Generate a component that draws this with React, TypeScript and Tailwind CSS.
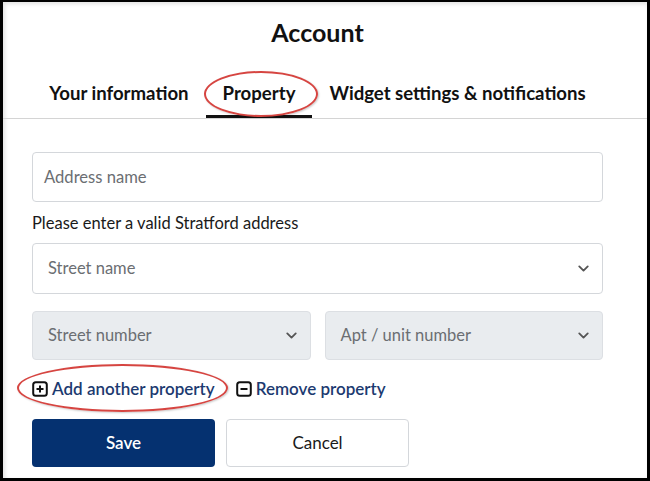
import { ChevronDown } from 'lucide-react';

function BoxIcon({ minus = false }: { minus?: boolean }) {
  return (
    <svg viewBox="0 0 16 16" className="h-[16px] w-[16px] shrink-0">
      <rect x="1.2" y="1.2" width="13.6" height="13.6" rx="2.5" fill="none" stroke="#111" strokeWidth="2" />
      <line x1="4.5" y1="8" x2="11.5" y2="8" stroke="#111" strokeWidth="2" />
      {!minus && <line x1="8" y1="4.5" x2="8" y2="11.5" stroke="#111" strokeWidth="2" />}
    </svg>
  );
}

function Select({ label, disabled = false }: { label: string; disabled?: boolean }) {
  return (
    <div
      className={
        disabled
          ? 'flex h-[49px] items-center justify-between rounded-[4px] border border-[#dcdfe3] bg-[#e9ecef] pl-[15px] pr-[10px]'
          : 'flex h-[51px] items-center justify-between rounded-[4px] border border-[#d4d7db] bg-white pl-[15px] pr-[10px]'
      }
    >
      <span className="text-[16.5px] text-[#6b6e72]">{label}</span>
      <ChevronDown className="h-[17px] w-[17px] text-[#555]" strokeWidth={2.6} />
    </div>
  );
}

export default function App() {
  const tabs = ['Your information', 'Property', 'Widget settings & notifications'];

  return (
    <div className="relative h-[481px] w-[650px] overflow-hidden border-b-[3px] border-l-[3px] border-r-[3px] border-t-2 border-black bg-white font-['Lato',sans-serif] text-[#212529] shadow-[inset_2px_2px_4px_rgba(0,0,0,0.12)]">
      <h1 className="pl-[29px] pr-[44px] pt-[16px] text-center text-[25px] font-bold leading-[29px] text-[#111]">
        Account
      </h1>

      {/* Tabs */}
      <div className="mt-[35px] flex justify-center whitespace-nowrap pl-[29px] pr-[44px]">
        {tabs.map((t) => (
          <div
            key={t}
            className={
              t === 'Property'
                ? 'shrink-0 border-b-[3px] border-[#111] px-[17px] pb-[11px] text-[18.6px] font-bold leading-[22px] text-[#111]'
                : 'shrink-0 border-b-[3px] border-transparent px-[17px] pb-[11px] text-[18.6px] font-bold leading-[22px] text-[#111]'
            }
          >
            {t}
          </div>
        ))}
      </div>
      <div className="h-px bg-[#d4d4d4]" />

      {/* Form */}
      <div className="pl-[29px] pr-[44px]">
        <div className="mt-[33px] flex h-[50px] items-center rounded-[4px] border border-[#d4d7db] pl-[11px]">
          <span className="text-[16.6px] text-[#6b6e72]">Address name</span>
        </div>
        <p className="mt-[11px] text-[16.5px] leading-[20px] text-[#1a1a1a]">
          Please enter a valid Stratford address
        </p>
        <div className="mt-[10px]">
          <Select label="Street name" />
        </div>
        <div className="mt-[17px] grid grid-cols-2 gap-[14px]">
          <Select label="Street number" disabled />
          <Select label="Apt / unit number" disabled />
        </div>

        <div className="mt-[18px] flex items-center gap-[21px] text-[17px] font-semibold leading-[22px] text-[#1c3a70]">
          <span className="flex items-center gap-[4px]">
            <BoxIcon />
            Add another property
          </span>
          <span className="flex items-center gap-[4px]">
            <BoxIcon minus />
            Remove property
          </span>
        </div>

        <div className="mt-[19px] flex gap-[11px]">
          <button className="h-[48px] w-[183px] rounded-[4px] bg-[#053170] text-[17px] font-semibold text-white">
            Save
          </button>
          <button className="h-[48px] w-[183px] rounded-[4px] border border-[#d4d7db] bg-white text-[17px] text-[#1a1a1a]">
            Cancel
          </button>
        </div>
      </div>

      {/* Annotation ellipses */}
      <div className="pointer-events-none absolute left-[201px] top-[69px] h-[46px] w-[114px] rounded-[50%] border-2 border-[#d64541] shadow-[1px_1px_2px_rgba(0,0,0,0.2)]" />
      <div className="pointer-events-none absolute left-[14px] top-[362px] h-[48px] w-[211px] rounded-[50%] border-2 border-[#d64541] shadow-[1px_1px_2px_rgba(0,0,0,0.2)]" />
    </div>
  );
}
